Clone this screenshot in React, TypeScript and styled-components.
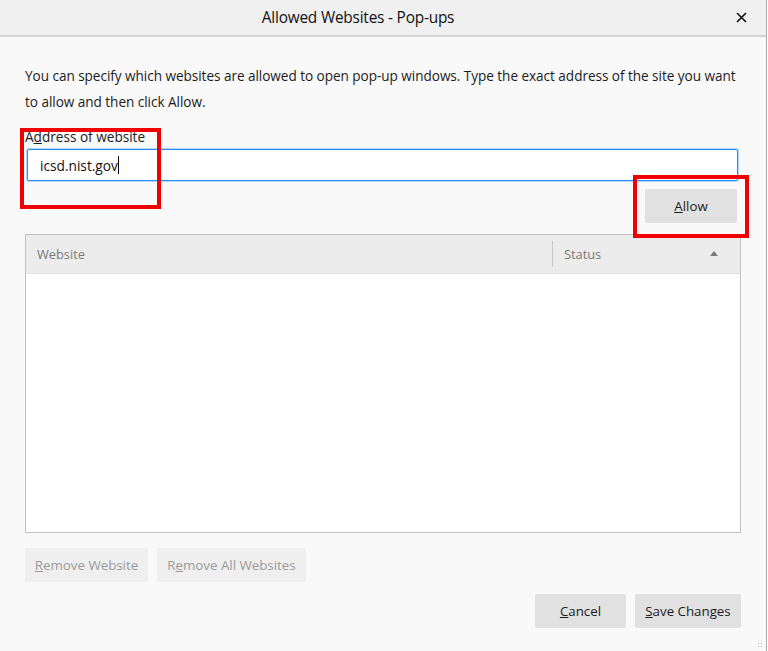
import React from "react";
import styled, { createGlobalStyle } from "styled-components";

const Global = createGlobalStyle`
  html, body { margin: 0; padding: 0; background: #ffffff; }
  body { font-family: "Open Sans", "Noto Sans", sans-serif; }
  * { box-sizing: border-box; }
`;

const Window = styled.div`
  position: relative;
  width: 767px;
  height: 651px;
  display: flex;
  flex-direction: column;
  background: #f9f9f9;
  border-right: 1px solid #a9a9a9;
  overflow: hidden;
`;

const TitleBar = styled.div`
  height: 37px;
  flex: none;
  display: flex;
  align-items: center;
  justify-content: center;
  position: relative;
  background: #f0f0f0;
  border-bottom: 2px solid #d3d3d3;
  padding-bottom: 1px;
`;

const Title = styled.div`
  font-size: 15.4px;
  color: #111;
  letter-spacing: -0.2px;
  margin-left: -50px;
`;

const CloseButton = styled.div`
  position: absolute;
  right: 18px;
  top: 10px;
  width: 14px;
  height: 14px;
  display: flex;
  align-items: center;
  justify-content: center;
`;

const Body = styled.div`
  flex: 1;
  display: flex;
  flex-direction: column;
  padding: 26px 25px 0 25px;
`;

const Description = styled.p`
  margin: 0;
  font-size: 13.6px;
  line-height: 26px;
  color: #1c1c1c;
  letter-spacing: -0.05px;
`;

const Label = styled.div`
  margin-top: 13px;
  font-size: 13.6px;
  line-height: 17px;
  color: #1c1c1c;
`;

const Input = styled.div`
  margin: 4px 3px 0 2px;
  height: 32px;
  background: #ffffff;
  border: 1px solid #2a8cf5;
  box-shadow: 0 0 0 1px rgba(10, 132, 255, 0.3);
  border-radius: 2px;
  display: flex;
  align-items: center;
  padding-left: 12px;
  font-size: 13.7px;
  color: #111;
`;

const Caret = styled.span`
  display: inline-block;
  width: 1px;
  height: 18px;
  background: #000;
`;

const AllowRow = styled.div`
  display: flex;
  justify-content: flex-end;
  margin-top: 8px;
  padding-right: 4px;
`;

const Button = styled.div<{ $w: number; $disabled?: boolean }>`
  width: ${(p) => p.$w}px;
  height: 34px;
  display: flex;
  align-items: center;
  justify-content: center;
  border-radius: 2px;
  font-size: 13.3px;
  background: ${(p) => (p.$disabled ? "#efefef" : "#e1e1e1")};
  color: ${(p) => (p.$disabled ? "#9a9a9a" : "#1c1c1c")};
`;

const Table = styled.div`
  margin-top: 11px;
  height: 299px;
  display: flex;
  flex-direction: column;
  background: #ffffff;
  border: 1px solid #c0c0c0;
`;

const Header = styled.div`
  height: 39px;
  flex: none;
  display: grid;
  grid-template-columns: 526px 1fr;
  background: #ececec;
  border-bottom: 1px solid #e0e0e0;
`;

const HeaderCell = styled.div<{ $sep?: boolean }>`
  display: flex;
  align-items: center;
  justify-content: space-between;
  padding: 0 22px 0 11px;
  font-size: 12.8px;
  color: #7a7a7a;
  margin: 6px 0;
  border-left: ${(p) => (p.$sep ? "1px solid #c8c8c8" : "none")};
`;

const SortArrow = styled.span`
  width: 0;
  height: 0;
  border-left: 4px solid transparent;
  border-right: 4px solid transparent;
  border-bottom: 5px solid #7a7a7a;
  margin-top: -1px;
`;

const RemoveRow = styled.div`
  display: flex;
  gap: 9px;
  margin-top: 15px;
`;

const FooterRow = styled.div`
  display: flex;
  justify-content: flex-end;
  gap: 9px;
  margin-top: 12px;
`;

const Annotation = styled.div<{ $l: number; $t: number; $w: number; $h: number }>`
  position: absolute;
  left: ${(p) => p.$l}px;
  top: ${(p) => p.$t}px;
  width: ${(p) => p.$w}px;
  height: ${(p) => p.$h}px;
  border: 4px solid #f00000;
  pointer-events: none;
`;

const Grip = styled.div`
  position: absolute;
  right: 3px;
  bottom: 3px;
  width: 6px;
  height: 6px;
  background-image: radial-gradient(circle, #b0b0b0 0.8px, transparent 1px);
  background-size: 3px 3px;
`;

export default function App() {
  return (
    <>
      <Global />
      <Window>
        <TitleBar>
          <Title>Allowed Websites - Pop-ups</Title>
          <CloseButton>
            <svg width="11" height="11" viewBox="0 0 11 11">
              <path d="M1 1 L10 10 M10 1 L1 10" stroke="#111" strokeWidth="1.6" />
            </svg>
          </CloseButton>
        </TitleBar>
        <Body>
          <Description>
            You can specify which websites are allowed to open pop-up windows. Type the exact address of the site you want
            to allow and then click Allow.
          </Description>
          <Label>
            A<u>d</u>dress of website
          </Label>
          <Input>
            icsd.nist.gov
            <Caret />
          </Input>
          <AllowRow>
            <Button $w={92}>
              <span>
                <u>A</u>llow
              </span>
            </Button>
          </AllowRow>
          <Table>
            <Header>
              <HeaderCell>Website</HeaderCell>
              <HeaderCell $sep>
                Status
                <SortArrow />
              </HeaderCell>
            </Header>
          </Table>
          <RemoveRow>
            <Button $w={123} $disabled>
              <span>
                <u>R</u>emove Website
              </span>
            </Button>
            <Button $w={149} $disabled>
              <span>
                R<u>e</u>move All Websites
              </span>
            </Button>
          </RemoveRow>
          <FooterRow>
            <Button $w={91}>
              <span>
                <u>C</u>ancel
              </span>
            </Button>
            <Button $w={106}>
              <span>
                <u>S</u>ave Changes
              </span>
            </Button>
          </FooterRow>
        </Body>
        <Annotation $l={20} $t={128} $w={141} $h={81} />
        <Annotation $l={633} $t={175} $w={116} $h={63} />
        <Grip />
      </Window>
    </>
  );
}
